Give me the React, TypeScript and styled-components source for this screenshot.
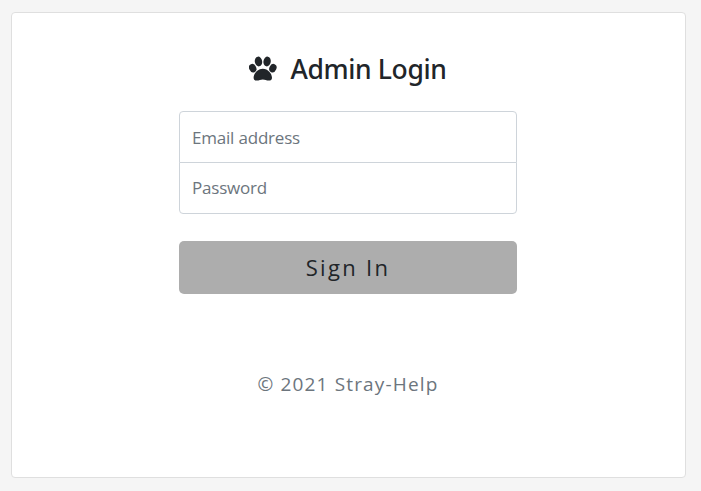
import React from "react";
import styled, { createGlobalStyle } from "styled-components";

const GlobalStyle = createGlobalStyle`
  * { box-sizing: border-box; }
  body {
    margin: 0;
    background: #f5f5f5;
    color: #212529;
    font-family: "Open Sans", "Noto Sans", sans-serif;
  }
`;

const Page = styled.main`
  height: 491px;
  padding: 12px 15px 13px 11px;
`;

const Card = styled.section`
  height: 466px;
  display: flex;
  flex-direction: column;
  align-items: center;
  padding-right: 1px;
  background: #fff;
  border: 1px solid #dfdfdf;
  border-radius: 4px;
`;

const Title = styled.h1`
  display: flex;
  align-items: center;
  gap: 13px;
  height: 34px;
  margin: 39px 0 25px;
  font-family: "Noto Sans", sans-serif;
  font-size: 26.5px;
  font-weight: 500;
  line-height: 34px;
  letter-spacing: -0.35px;
  white-space: nowrap;
`;

const PawIcon = styled.svg`
  width: 28px;
  height: 26px;
  flex: none;
  fill: currentColor;
`;

const Form = styled.form`
  width: 338px;
  display: flex;
  flex-direction: column;
`;

const Field = styled.input<{ $position: "top" | "bottom" }>`
  width: 100%;
  height: 52px;
  margin: 0 0 ${(p) => (p.$position === "top" ? "-1px" : "0")};
  padding: 0 12px ${(p) => (p.$position === "top" ? "0" : "2px")};
  border: 1px solid #ced4da;
  border-radius: ${(p) => (p.$position === "top" ? "4px 4px 0 0" : "0 0 4px 4px")};
  font: 400 17px "Open Sans", sans-serif;
  letter-spacing: -0.2px;
  &::placeholder { color: #6c757d; opacity: 1; }
`;

const SubmitButton = styled.button`
  height: 53px;
  margin-top: 27px;
  padding: 0 0 1px;
  border: 0;
  border-radius: 5px;
  background: #adadad;
  color: #212529;
  font: 400 22px "Open Sans", sans-serif;
  letter-spacing: 2.3px;
`;

const Copyright = styled.p`
  margin: 76px 0 0;
  color: #6c757d;
  font-size: 19px;
  line-height: 28px;
  letter-spacing: 1.15px;
  white-space: nowrap;
`;

function Paw() {
  return (
    <PawIcon viewBox="0 0 28 26" aria-hidden="true">
      <ellipse cx="3.7" cy="12.2" rx="3.5" ry="4.4" transform="rotate(-24 3.7 12.2)" />
      <ellipse cx="9.5" cy="5.5" rx="3.7" ry="4.9" transform="rotate(-9 9.5 5.5)" />
      <ellipse cx="18.1" cy="5.5" rx="3.7" ry="4.9" transform="rotate(9 18.1 5.5)" />
      <ellipse cx="23.9" cy="12.2" rx="3.5" ry="4.4" transform="rotate(24 23.9 12.2)" />
      <path d="M13.8 12.8c-5 0-9.2 4.8-9.2 9 0 2 1.2 2.8 3.3 2.8 2.2 0 3.7-1.1 5.9-1.1s3.7 1.1 5.9 1.1c2.1 0 3.3-.8 3.3-2.8 0-4.2-4.2-9-9.2-9z" />
    </PawIcon>
  );
}

export default function App() {
  return (
    <Page>
      <GlobalStyle />
      <Card>
        <Title>
          <Paw />
          <span>Admin Login</span>
        </Title>
        <Form>
          <Field $position="top" type="email" placeholder="Email address" />
          <Field $position="bottom" type="password" placeholder="Password" />
          <SubmitButton type="button">Sign In</SubmitButton>
        </Form>
        <Copyright>© 2021 Stray-Help</Copyright>
      </Card>
    </Page>
  );
}
